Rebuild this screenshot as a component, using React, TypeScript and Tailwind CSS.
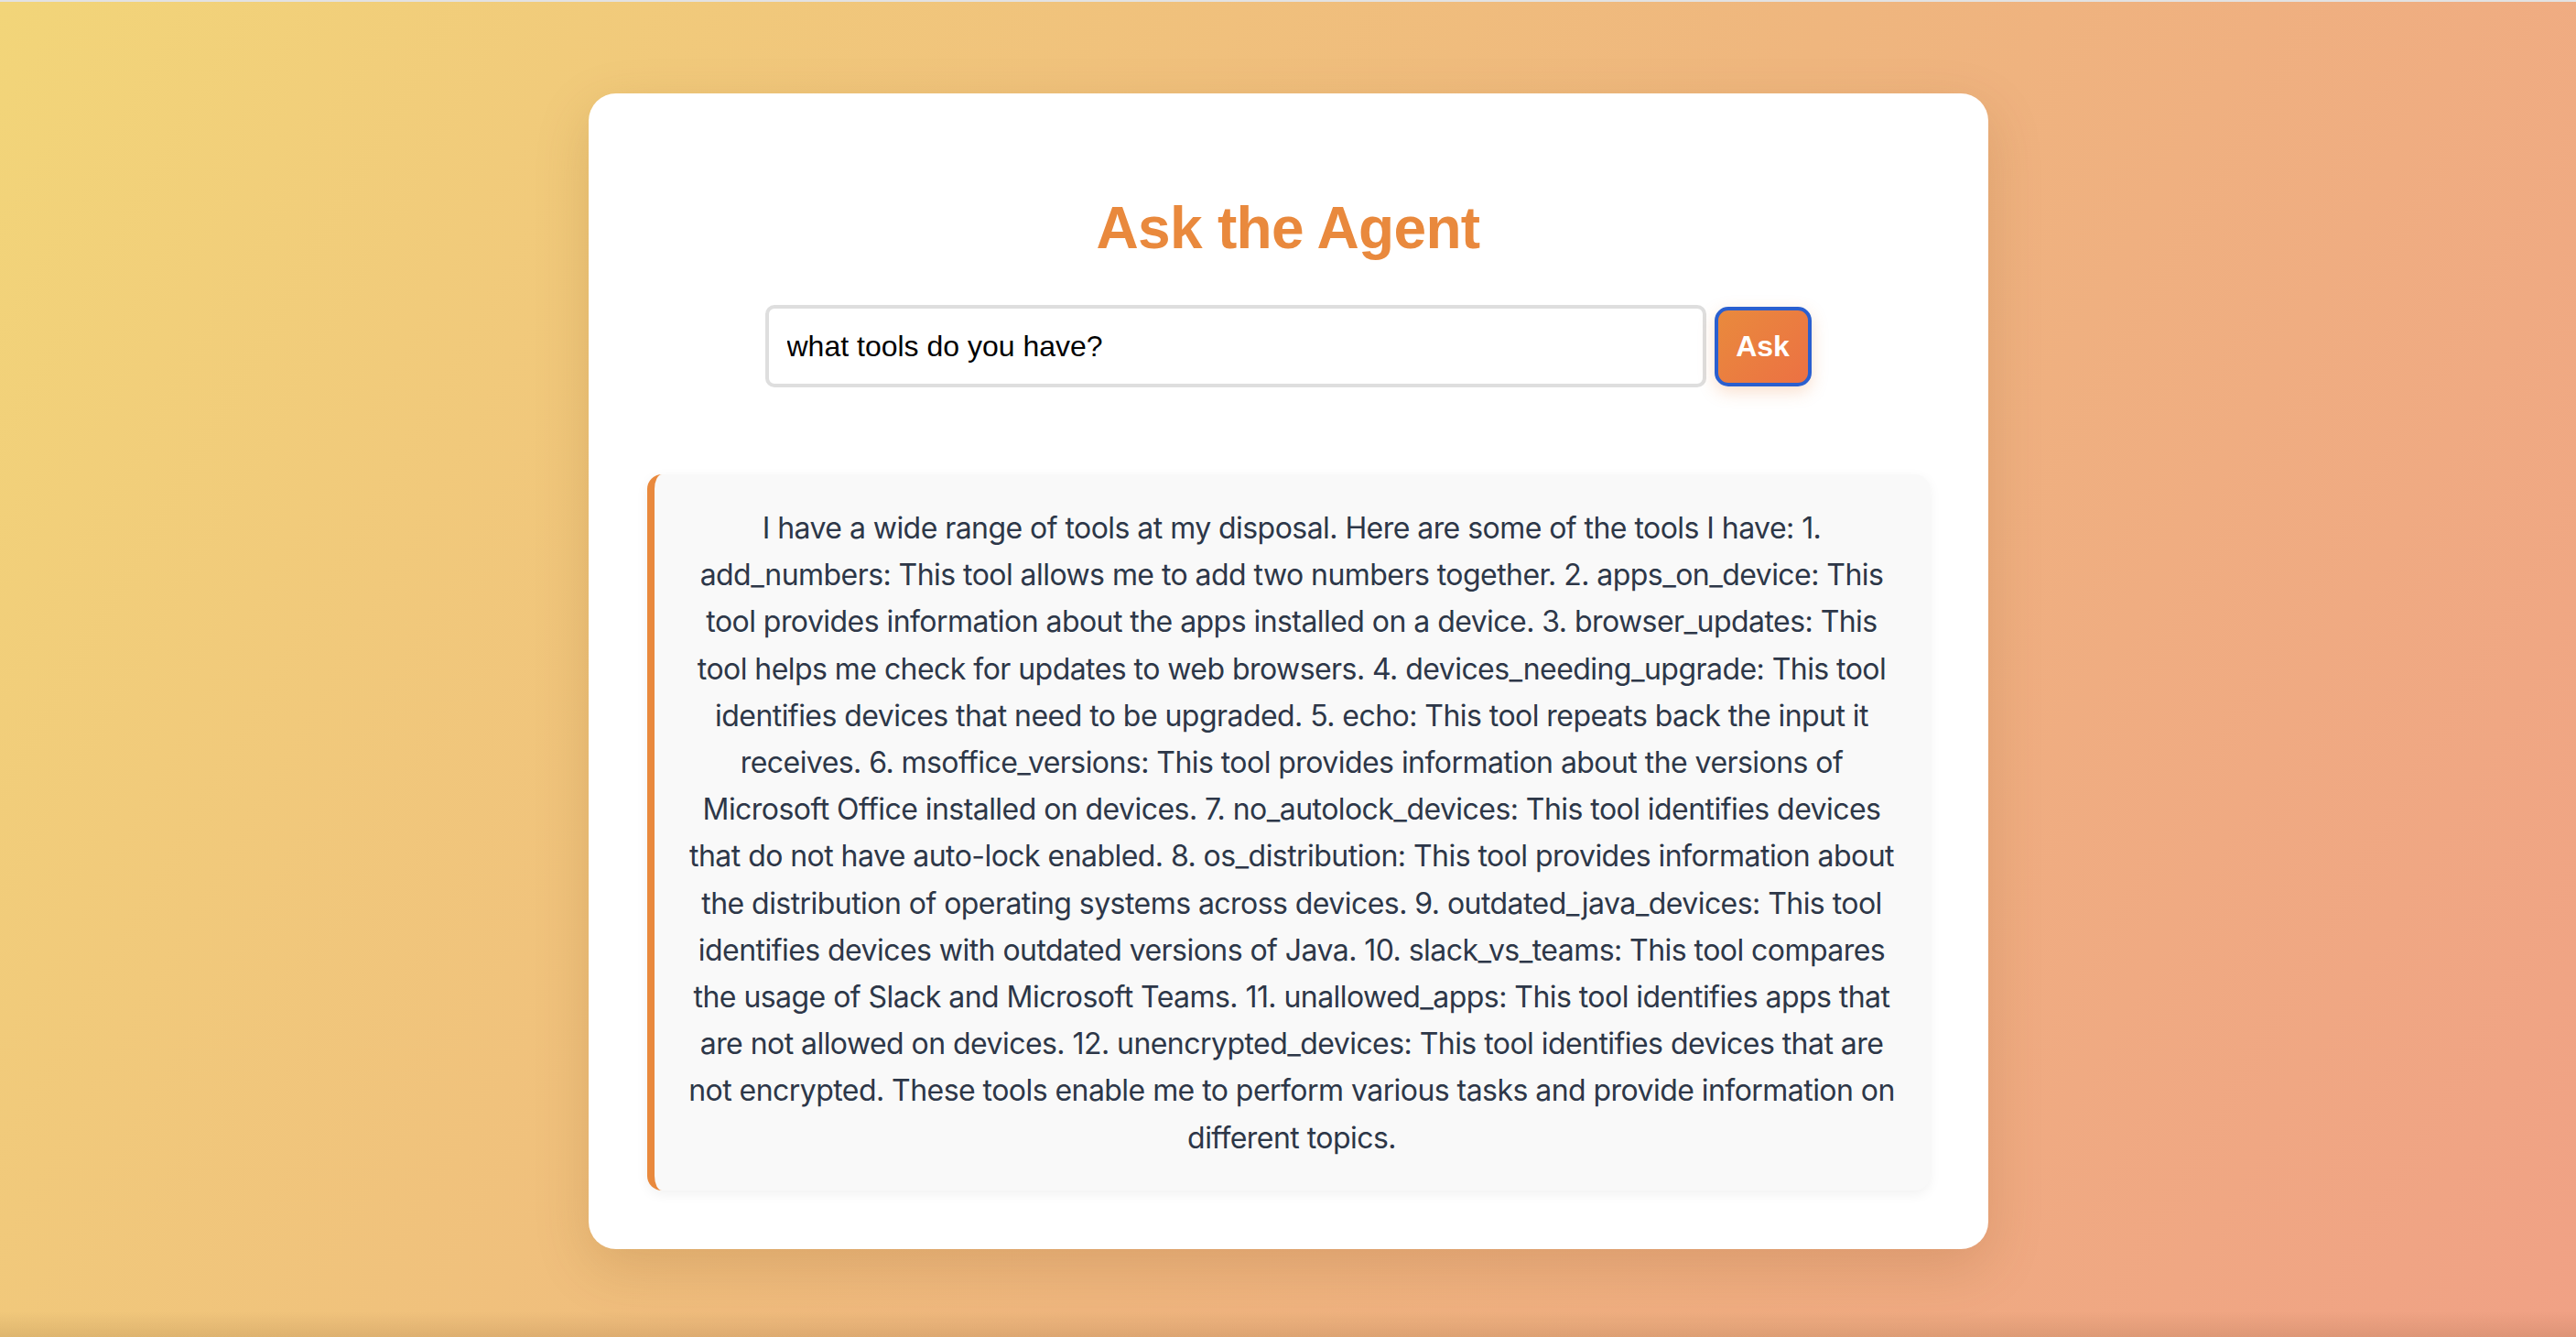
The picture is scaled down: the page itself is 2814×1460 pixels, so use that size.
import React from 'react';

const answerLines = [
  'I have a wide range of tools at my disposal. Here are some of the tools I have: 1.',
  'add_numbers: This tool allows me to add two numbers together. 2. apps_on_device: This',
  'tool provides information about the apps installed on a device. 3. browser_updates: This',
  'tool helps me check for updates to web browsers. 4. devices_needing_upgrade: This tool',
  'identifies devices that need to be upgraded. 5. echo: This tool repeats back the input it',
  'receives. 6. msoffice_versions: This tool provides information about the versions of',
  'Microsoft Office installed on devices. 7. no_autolock_devices: This tool identifies devices',
  'that do not have auto-lock enabled. 8. os_distribution: This tool provides information about',
  'the distribution of operating systems across devices. 9. outdated_java_devices: This tool',
  'identifies devices with outdated versions of Java. 10. slack_vs_teams: This tool compares',
  'the usage of Slack and Microsoft Teams. 11. unallowed_apps: This tool identifies apps that',
  'are not allowed on devices. 12. unencrypted_devices: This tool identifies devices that are',
  'not encrypted. These tools enable me to perform various tasks and provide information on',
  'different topics.',
];

const App = () => {
  return (
    <div className="flex h-[1460px] w-full flex-col overflow-hidden border-t-2 border-[#e2e2e2] bg-[linear-gradient(120deg,#f2d579_0%,#efb67e_55%,#f0a185_100%)]">
      <div className="flex-1 pt-[100px]">
        <div className="mx-auto flex w-[1529px] flex-col rounded-[30px] bg-white px-[64px] pb-[64px] pt-[111px] shadow-[0_20px_60px_rgba(120,70,20,0.18)]">
          <h1 className="text-center font-['Liberation_Sans',Arial,sans-serif] text-[64px] font-bold leading-[72px] tracking-[-0.7px] text-[#e9893d]">
            Ask the Agent
          </h1>

          <div className="mt-[48px] flex items-center justify-center">
            <input
              className="h-[90px] w-[1028px] rounded-[10px] border-[4px] border-[#dedede] bg-white px-[20px] font-['Liberation_Sans',Arial,sans-serif] text-[32px] text-black outline-none"
              defaultValue="what tools do you have?"
            />
            <button className="ml-[9px] h-[87px] w-[106px] rounded-[15px] border-[4px] border-[#2a5fcf] bg-[linear-gradient(135deg,#e98a3d_0%,#ec7143_100%)] font-['Liberation_Sans',Arial,sans-serif] text-[32px] font-bold text-white shadow-[0_6px_18px_rgba(236,130,60,0.25)]">
              Ask
            </button>
          </div>

          <div className="mt-[95px] rounded-[16px] border-l-[8px] border-[#e9893d] bg-[#f9f9f9] px-[32px] pb-[32px] pt-[33px] shadow-[0_4px_14px_rgba(0,0,0,0.06)]">
            <p className="text-center font-['Inter','Noto_Sans',sans-serif] text-[32px] leading-[51.2px] tracking-[-0.55px] text-[#2d3748]">
              {answerLines.map((line, i) => (
                <React.Fragment key={i}>
                  <span className="whitespace-nowrap">{line}</span>
                  {i < answerLines.length - 1 && <br />}
                </React.Fragment>
              ))}
            </p>
          </div>
        </div>
      </div>
      <div className="h-[28px] bg-[linear-gradient(to_bottom,rgba(0,0,0,0),rgba(90,50,20,0.12))]" />
    </div>
  );
};

export default App;
